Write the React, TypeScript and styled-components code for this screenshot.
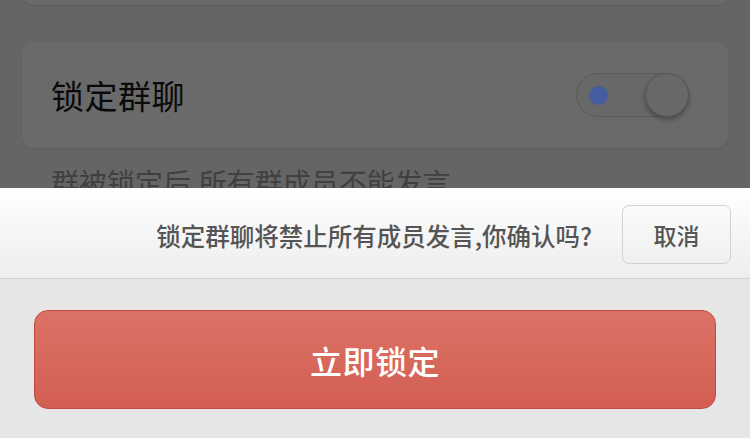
import React from "react";
import styled, { createGlobalStyle } from "styled-components";

const Global = createGlobalStyle`
  html, body { margin: 0; padding: 0; }
  body {
    width: 750px;
    height: 438px;
    overflow: hidden;
    background: #f2f2f2;
    font-family: "Noto Sans CJK SC", "Noto Sans", sans-serif;
  }
`;

const Page = styled.div`
  position: relative;
  width: 750px;
  height: 438px;
  overflow: hidden;
  background: #f2f2f2;
`;

const Content = styled.div`
  display: flex;
  flex-direction: column;
  padding: 0 22px 0 22px;
  margin-top: -60px;
`;

const Card = styled.div<{ $h: number }>`
  height: ${(p) => p.$h}px;
  background: #ffffff;
  border-radius: 12px;
  box-shadow: 0 1px 2px rgba(0, 0, 0, 0.08);
  display: flex;
  align-items: center;
  justify-content: space-between;
  padding: 0 39px 0 29px;
  box-sizing: border-box;
`;

const Gap = styled.div<{ $h: number }>`
  height: ${(p) => p.$h}px;
`;

const Title = styled.span`
  font-size: 33px;
  color: #1a1a1a;
  letter-spacing: 0.5px;
`;

const Switch = styled.div`
  position: relative;
  width: 113px;
  height: 44px;
  border-radius: 22px;
  border: 1px solid #d8d8d8;
  box-sizing: border-box;
  background: #fafafa;
`;

const Dot = styled.span`
  position: absolute;
  z-index: 2;
  left: 12px;
  top: 12px;
  width: 19px;
  height: 19px;
  border-radius: 50%;
  background: #455d9e;
`;

const Knob = styled.span`
  position: absolute;
  right: -1px;
  top: -1px;
  width: 44px;
  height: 44px;
  border-radius: 50%;
  background: #fbfbfb;
  border: 1px solid #d0d0d0;
  box-sizing: border-box;
  box-shadow: 0 3px 5px rgba(0, 0, 0, 0.3);
`;

const Hint = styled.div`
  font-size: 28px;
  color: #9a9a9a;
  padding: 16px 0 0 29px;
  line-height: 36px;
`;

const Overlay = styled.div`
  position: absolute;
  z-index: 1;
  inset: 0;
  background: rgba(0, 0, 0, 0.585);
`;

const Sheet = styled.div`
  position: absolute;
  z-index: 3;
  left: 0;
  right: 0;
  bottom: 0;
  height: 250px;
  display: flex;
  flex-direction: column;
  background: #e6e6e6;
`;

const SheetHeader = styled.div`
  height: 91px;
  box-sizing: border-box;
  display: flex;
  align-items: center;
  justify-content: flex-end;
  padding-right: 19px;
  gap: 30px;
  background: linear-gradient(#ffffff, #ededed);
  border-bottom: 1px solid #d4d4d4;
`;

const Message = styled.span`
  font-size: 24.5px;
  font-weight: 500;
  color: #555555;
  margin-top: 4px;
`;

const CancelButton = styled.button`
  width: 109px;
  height: 59px;
  border-radius: 7px;
  border: 1px solid #d2d2d2;
  background: linear-gradient(#fbfbfb, #f0f0f0);
  font-family: inherit;
  font-size: 23px;
  font-weight: 500;
  color: #555555;
  padding: 0;
  margin-top: 3px;
`;

const SheetBody = styled.div`
  flex: 1;
  padding: 31px 34px 0 34px;
`;

const ConfirmButton = styled.button`
  width: 100%;
  height: 99px;
  border-radius: 14px;
  border: 1px solid #c04a3f;
  background: linear-gradient(#dc7266, #d35e52);
  color: #ffffff;
  font-family: inherit;
  font-size: 32px;
  font-weight: 500;
  letter-spacing: 0.5px;
  padding: 0;
`;

export default function App() {
  return (
    <>
      <Global />
      <Page>
        <Content>
          <Card $h={65} />
          <Gap $h={37} />
          <Card $h={106}>
            <Title>锁定群聊</Title>
            <Switch>
              <Dot />
              <Knob />
            </Switch>
          </Card>
          <Hint>群被锁定后,所有群成员不能发言</Hint>
        </Content>
        <Overlay />
        <Sheet>
          <SheetHeader>
            <Message>锁定群聊将禁止所有成员发言,你确认吗?</Message>
            <CancelButton>取消</CancelButton>
          </SheetHeader>
          <SheetBody>
            <ConfirmButton>立即锁定</ConfirmButton>
          </SheetBody>
        </Sheet>
      </Page>
    </>
  );
}
